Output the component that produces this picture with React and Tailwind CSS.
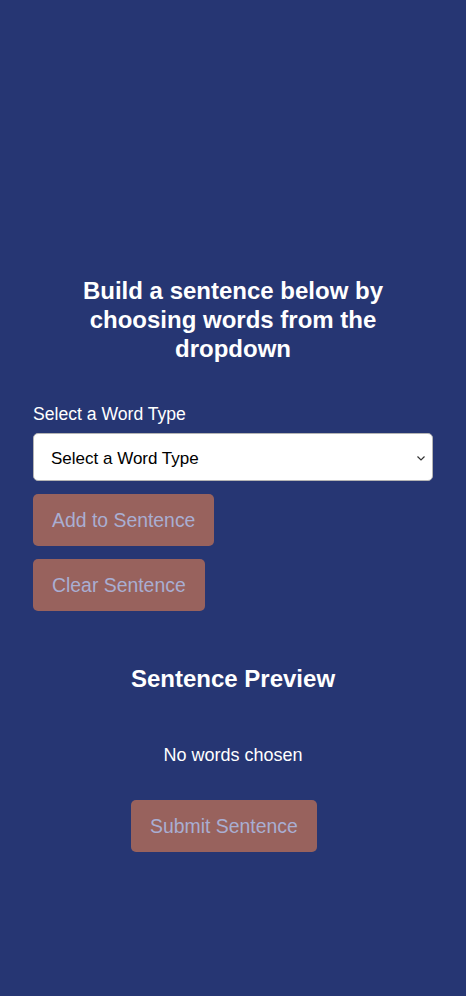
import React, { useState } from 'react';

const btn =
  "h-[52px] px-[19px] rounded-[5px] bg-[#98625d] text-[#a9aed2] text-[19.4px] leading-[52px] whitespace-nowrap";

export default function App() {
  const [words, setWords] = useState([]);

  return (
    <div className="min-h-[996px] bg-[#263673] font-['Liberation_Sans',Arial,sans-serif] text-white px-[33px] pt-[276px]">
      <h1 className="text-[24px] font-bold leading-[29px] text-center">
        Build a sentence below by choosing words from the dropdown
      </h1>

      <label className="block mt-[41px] text-[17.6px] leading-[21px]">Select a Word Type</label>
      <div className="relative mt-[8px]">
        <select className="appearance-none w-full h-[48px] rounded-[5px] bg-white border border-[#b4b4b4] pl-[17px] pt-[3px] text-black text-[17px] outline-none">
          <option>Select a Word Type</option>
          <option>Noun</option>
          <option>Verb</option>
          <option>Adjective</option>
        </select>
        <svg className="absolute right-[6px] top-[21px] pointer-events-none" width="12" height="8" viewBox="0 0 12 8">
          <path d="M2.5 2.5l3.5 3.5 3.5-3.5" fill="none" stroke="#333" strokeWidth="1.2" />
        </svg>
      </div>

      <div className="flex flex-col items-start gap-[13px] mt-[13px]">
        <button className={btn}>Add to Sentence</button>
        <button className={btn} onClick={() => setWords([])}>Clear Sentence</button>
      </div>

      <h2 className="mt-[54px] text-[24px] font-bold leading-[28px] text-center">Sentence Preview</h2>
      <p className="mt-[52px] text-[18px] leading-[21px] text-center">
        {words.length ? words.join(' ') : 'No words chosen'}
      </p>

      <div className="flex mt-[34px] pl-[98px]">
        <button className={btn}>Submit Sentence</button>
      </div>
    </div>
  );
}
